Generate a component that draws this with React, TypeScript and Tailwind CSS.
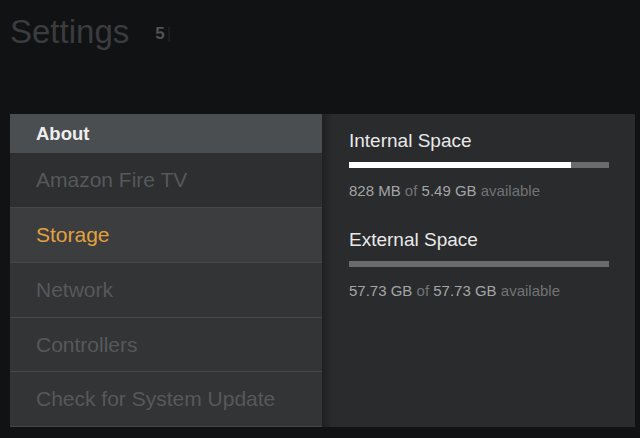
export default function App() {
  const items = [
    { label: "Amazon Fire TV", bg: "bg-[#2d2f31]", color: "text-[#56595b]" },
    { label: "Storage", bg: "bg-[#3b3d3f]", color: "text-[#e3a13d]" },
    { label: "Network", bg: "bg-[#323436]", color: "text-[#56595b]" },
    { label: "Controllers", bg: "bg-[#323436]", color: "text-[#56595b]" },
    { label: "Check for System Update", bg: "bg-[#323436]", color: "text-[#56595b]" },
  ];
  return (
    <div
      className="w-[640px] h-[438px] bg-[#111214] overflow-hidden flex flex-col"
      style={{ fontFamily: '"Liberation Sans", Arial, sans-serif' }}
    >
      <div className="h-[114px] flex items-start pl-[10px] pt-[13px]">
        <span className="text-[33px] leading-[38px] text-[#3b3c3e]">Settings</span>
        <span className="ml-[26px] mt-[11px] text-[17px] leading-[20px] font-bold text-[#505254]">5</span>
        <span className="ml-[2px] mt-[11px] text-[17px] leading-[20px] text-[#222325]">|</span>
      </div>
      <div className="flex h-[313px]">
        <div className="ml-[10px] w-[312px] flex flex-col">
          <div className="h-[39px] bg-[#4b4e51] flex items-center pl-[26px]">
            <span className="text-[18.5px] font-bold text-[#eeeeee]">About</span>
          </div>
          {items.map((it, i) => (
            <div
              key={it.label}
              className={`h-[55px] ${it.bg} flex items-center pl-[26px] ${i > 0 ? "border-t border-[#45484a]" : ""}`}
            >
              <span className={`text-[21px] ${it.color}`}>{it.label}</span>
            </div>
          ))}
          <div className="h-px bg-[#45484a]" />
        </div>
        <div className="w-[313px] bg-[#2a2b2d] relative pl-[27px] pt-[16px]">
          <div className="absolute left-0 top-0 bottom-0 w-[10px] bg-gradient-to-r from-[#1f2022] to-[#2a2b2d]" />
          <div className="text-[19px] leading-[22px] text-[#e9e9e9]">Internal Space</div>
          <div className="mt-[10px] w-[260px] h-[6px] bg-[#696b6d] flex">
            <div className="h-full bg-white" style={{ width: `${(222 / 260) * 100}%` }} />
          </div>
          <div className="mt-[14px] text-[15px] leading-[18px] text-[#717375]">
            <span className="text-[#a3a5a7]">828 MB</span> of <span className="text-[#a3a5a7]">5.49 GB</span> available
          </div>
          <div className="mt-[29px] text-[19px] leading-[22px] text-[#e9e9e9]">External Space</div>
          <div className="mt-[10px] w-[260px] h-[6px] bg-[#696b6d]" />
          <div className="mt-[15px] text-[15px] leading-[18px] text-[#717375]">
            <span className="text-[#a3a5a7]">57.73 GB</span> of <span className="text-[#a3a5a7]">57.73 GB</span> available
          </div>
        </div>
      </div>
    </div>
  );
}
